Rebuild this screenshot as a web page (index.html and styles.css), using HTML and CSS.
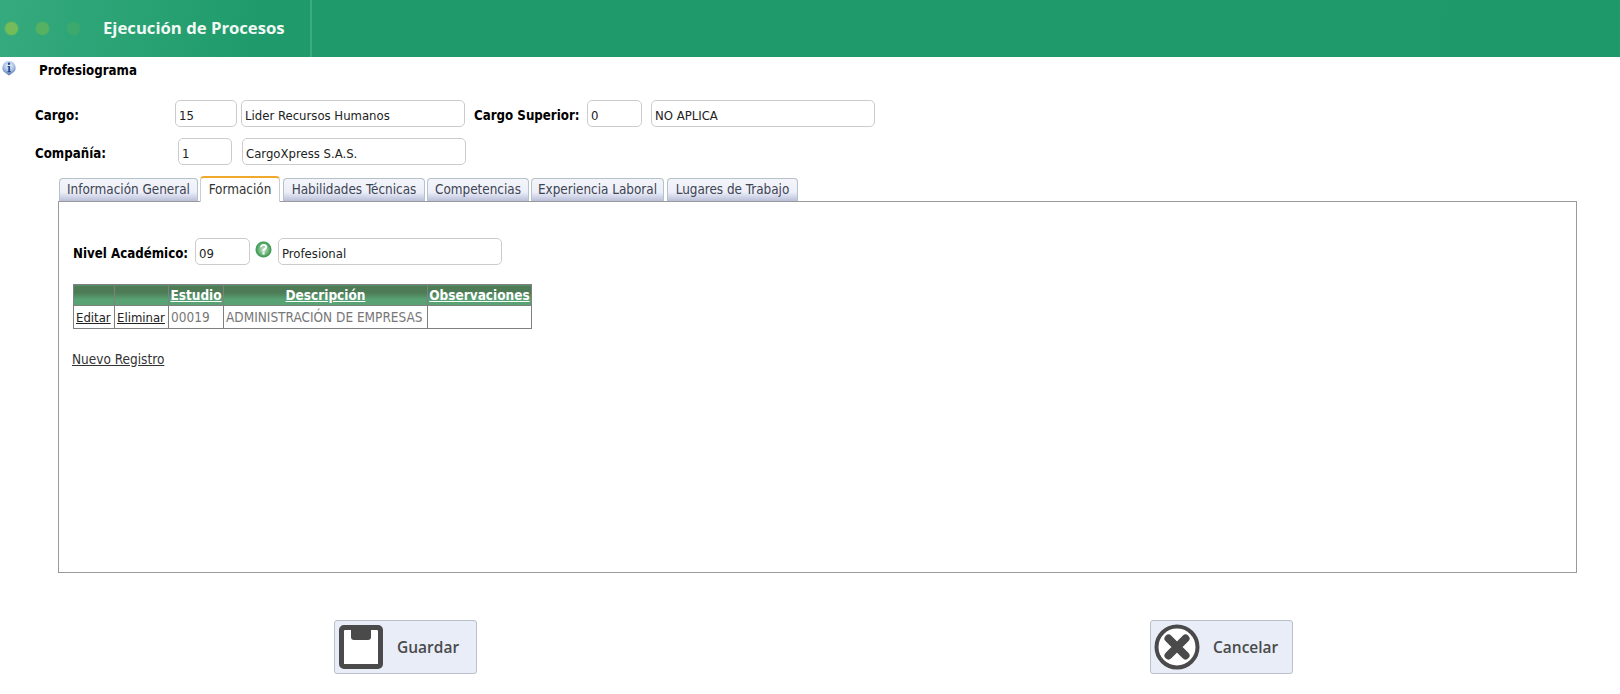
FILE: index.html
```html
<!DOCTYPE html>
<html lang="es">
<head>
<meta charset="utf-8">
<title>Ejecución de Procesos</title>
<link rel="stylesheet" href="styles.css">
</head>
<body>
<header class="topbar">
  <div class="dots"><span class="dot d1"></span><span class="dot d2"></span><span class="dot d3"></span></div>
  <div class="app-title">Ejecución de Procesos</div>
</header>
<div class="page-title">
  <svg class="info-icon" width="16" height="16" viewBox="0 0 16 16"><defs><radialGradient id="ib" cx="50%" cy="30%" r="70%"><stop offset="0" stop-color="#f4f7fc"/><stop offset="0.6" stop-color="#a3bce4"/><stop offset="1" stop-color="#4a6ea8"/></radialGradient></defs><path d="M8 1a6.500 6.500 0 0 1 3.500 12L8 15.500 4.500 13A6.500 6.500 0 0 1 8 1z" fill="url(#ib)"/><circle cx="8" cy="3.800" r="1.300" fill="#27488a"/><path d="M6.600 6h2.500v5.200h.9v1H6.400v-1h.9V7H6.600z" fill="#27488a"/></svg>
  <span class="page-name">Profesiograma</span>
</div>
<section class="form">
  <div class="row row-a">
    <label class="lbl lbl-cargo">Cargo:</label>
    <input class="inp w-a" value="15">
    <input class="inp w-name ml5" value="Lider Recursos Humanos">
    <label class="lbl lbl-sup">Cargo Superior:</label>
    <input class="inp w-b" value="0">
    <input class="inp w-name ml9" value="NO APLICA">
  </div>
  <div class="row row-b">
    <label class="lbl lbl-comp">Compañía:</label>
    <input class="inp w-c" value="1">
    <input class="inp w-name ml10" value="CargoXpress S.A.S.">
  </div>
</section>
<nav class="tabs">
  <a class="tab t1">Información General</a>
  <a class="tab active t2">Formación</a>
  <a class="tab t3">Habilidades Técnicas</a>
  <a class="tab t4">Competencias</a>
  <a class="tab t5">Experiencia Laboral</a>
  <a class="tab t6">Lugares de Trabajo</a>
</nav>
<section class="panel">
  <div class="row row-nivel">
    <label class="lbl lbl-nivel">Nivel Académico:</label>
    <input class="inp w-d" value="09">
    <svg class="help-icon" width="17" height="17" viewBox="0 0 17 17"><defs><radialGradient id="hb" cx="50%" cy="50%" r="55%"><stop offset="0" stop-color="#cfe8d2"/><stop offset="0.55" stop-color="#6fb67c"/><stop offset="0.82" stop-color="#3f9a55"/><stop offset="1" stop-color="#cfe8d2"/></radialGradient></defs><circle cx="8.500" cy="8.500" r="8.200" fill="url(#hb)"/><path d="M5 6.400C5.200 4.200 6.800 3 8.700 3c2.100 0 3.500 1.200 3.500 2.900 0 2.500-2.600 2.600-2.600 4.500H7.400c0-2.900 2.500-3 2.500-4.500 0-.7-.5-1.100-1.300-1.100-.8 0-1.300.5-1.400 1.300z" fill="#fff"/><rect x="7.400" y="11.300" width="2.200" height="2.200" fill="#fff"/></svg>
    <input class="inp w-name" value="Profesional">
  </div>
  <table class="grid">
    <thead>
      <tr>
        <th class="c1"></th>
        <th class="c2"></th>
        <th class="c3"><a>Estudio</a></th>
        <th class="c4"><a>Descripción</a></th>
        <th class="c5"><a>Observaciones</a></th>
      </tr>
    </thead>
    <tbody>
      <tr>
        <td class="lnk"><a>Editar</a></td>
        <td class="lnk"><a>Eliminar</a></td>
        <td>00019</td>
        <td>ADMINISTRACIÓN DE EMPRESAS</td>
        <td></td>
      </tr>
    </tbody>
  </table>
  <a class="new-link">Nuevo Registro</a>
</section>
<footer class="actions">
  <button class="btn btn-save" type="button">
    <svg width="46" height="46" viewBox="0 0 46 46"><rect x="3" y="3" width="40" height="40" fill="#fff"/><path fill-rule="evenodd" fill="#4a4a4a" d="M6 1h34a5 5 0 0 1 5 5v34a5 5 0 0 1-5 5H6a5 5 0 0 1-5-5V6a5 5 0 0 1 5-5zM6 7v33h34V7a1 1 0 0 0-1-1h-6v7a3 3 0 0 1-3 3H16a3 3 0 0 1-3-3V6H7a1 1 0 0 0-1 1z"/></svg>
    <span>Guardar</span>
  </button>
  <button class="btn btn-cancel" type="button">
    <svg width="46" height="46" viewBox="0 0 46 46"><circle cx="23" cy="23" r="20.500" fill="#fff" stroke="#4a4a4a" stroke-width="4"/><path d="M14.500 14.500l17 17M31.500 14.500l-17 17" stroke="#4a4a4a" stroke-width="8" stroke-linecap="round"/></svg>
    <span>Cancelar</span>
  </button>
</footer>
</body>
</html>
```

FILE: styles.css
```css
* { box-sizing: border-box; }
html, body { margin: 0; padding: 0; }
body {
  width: 1620px;
  height: 694px;
  overflow: hidden;
  background: #fff;
  font-family: "DejaVu Sans Condensed", "DejaVu Sans", sans-serif;
  font-size: 13px;
  color: #000;
}
.topbar {
  height: 57px;
  display: flex;
  align-items: center;
  background: linear-gradient(100deg, #35aa7e 0, #1f9b6b 260px, #1e9a6a 100%);
}
.dots {
  width: 103px;
  display: flex;
  gap: 18px;
  padding-left: 5px;
  align-items: center;
}
.dot { width: 13px; height: 13px; border-radius: 50%; }
.d1 { background: #74bb59; box-shadow: 0 0 2px #74bb59; }
.d2 { background: #56b262; box-shadow: 0 0 2px #56b262; }
.d3 { background: #3ca96d; box-shadow: 0 0 2px #3ca96d; }
.app-title {
  width: 209px;
  height: 57px;
  line-height: 55px;
  border-right: 2px solid #3cab81;
  color: #f2f8f4;
  font-family: "Open Sans", sans-serif;
  font-weight: 700;
  font-size: 16.700px;
}
.page-title {
  height: 24px;
  display: flex;
  align-items: center;
  padding-left: 1px;
}
.info-icon { margin-top: -2px; }
.page-name {
  margin-left: 22px;
  font-weight: 700;
  font-size: 13.200px;
  margin-top: 3px;
}
.form { padding-top: 19px; }
.row { display: flex; align-items: center; height: 27px; }
.row-b { margin-top: 11px; }
.lbl { font-weight: 700; font-size: 13.200px; display: block; padding-top: 3px; }
.lbl-cargo { margin-left: 35px; width: 140px; }
.lbl-comp { margin-left: 35px; width: 143px; }
.lbl-sup { margin-left: 9px; width: 113px; }
.lbl-nivel { margin-left: 15px; width: 122px; }
.inp {
  height: 27px;
  border: 1px solid #ccc;
  border-radius: 5px;
  padding: 4px 3px 0;
  font-family: inherit;
  font-size: 13px;
  color: #222;
  background: #fff;
  outline: none;
}
.w-a { width: 62px; }
.w-b { width: 55px; }
.w-c { width: 54px; }
.w-d { width: 55px; }
.w-name { width: 224px; }
.ml5 { margin-left: 4px; }
.ml9 { margin-left: 9px; }
.ml10 { margin-left: 10px; }
.tabs {
  display: flex;
  gap: 2px;
  margin: 12px 0 0 59px;
  height: 24px;
  align-items: flex-end;
  position: relative;
  z-index: 1;
}
.tab {
  height: 23px;
  line-height: 22px;
  text-align: center;
  font-size: 13.400px;
  color: #3d4452;
  border: 1px solid #b4c2ca;
  border-bottom: 0;
  border-radius: 4px 4px 0 0;
  background: linear-gradient(#f4f5fb, #eceef8 60%, #b9bfd9);
}
.t1 { width: 139px; }
.t2 { width: 80px; margin-right: 1px; }
.t3 { width: 142px; }
.t4 { width: 102px; }
.t5 { width: 133px; margin-right: 1px; }
.t6 { width: 131px; }
.tab.active {
  height: 26px;
  line-height: 23px;
  margin-bottom: -1px;
  background: #fff;
  border-color: #c9ced4;
  border-top: 2px solid #f0a92c;
  color: #333;
}
.panel {
  margin-left: 58px;
  width: 1519px;
  height: 372px;
  border: 1px solid #9a9a9a;
  padding: 36px 0 0;
}
.row-nivel { margin-left: -1px; }
.help-icon { margin: -5px 6px 0 5px; }
.grid {
  margin: 19px 0 0 14px;
  width: 458px;
  border-collapse: collapse;
  table-layout: fixed;
  border: 1px solid #808080;
}
.grid th {
  height: 21px;
  padding: 0 1px;
  border: 1px solid #808080;
  background: linear-gradient(#4f7d56 0, #4d7a55 35%, #58a274 70%, #58a274 100%);
  color: #fff;
  font-weight: 700;
  font-size: 13.500px;
  text-decoration: underline;
  white-space: nowrap;
}
.grid td {
  height: 23px;
  padding: 0 2px;
  border: 1px solid #808080;
  color: #777;
  font-size: 13.500px;
  white-space: nowrap;
}
.grid td.lnk { color: #222; font-size: 13px; text-decoration: underline; padding: 0 2px; }
.c1 { width: 41px; }
.c2 { width: 54px; }
.c3 { width: 55px; }
.c4 { width: 204px; }
.c5 { width: 104px; }
.new-link {
  display: block;
  margin: 21px 0 0 13px;
  font-size: 13.500px;
  line-height: 18px;
  color: #333;
  text-decoration: underline;
}
.actions {
  display: flex;
  gap: 673px;
  padding: 47px 0 0 334px;
}
.btn {
  width: 143px;
  height: 54px;
  padding: 0 0 0 3px;
  display: flex;
  align-items: center;
  border: 1px solid #b9c0cc;
  border-radius: 3px;
  background: #e8edf8;
  color: #4a4a4a;
  font-family: "Open Sans", sans-serif;
  font-weight: 600;
  font-size: 15.500px;
}
.btn span { margin-left: 13px; }
```
